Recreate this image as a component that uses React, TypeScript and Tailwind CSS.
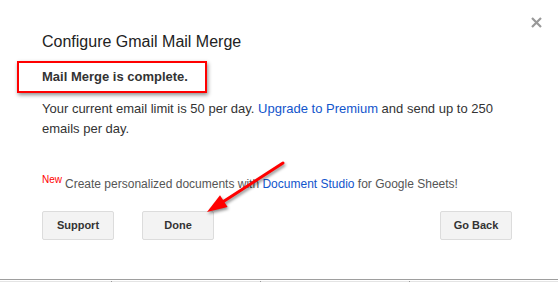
export default function App() {
  return (
    <div className="relative flex h-[282px] w-[558px] flex-col overflow-hidden bg-white font-['Liberation_Sans',Arial,sans-serif]">
      {/* close */}
      <button className="absolute right-[16px] top-[17px] text-[#999]" aria-label="Close">
        <svg width="11" height="11" viewBox="0 0 11 11">
          <path d="M1 1L10 10M10 1L1 10" stroke="currentColor" strokeWidth="2.2" />
        </svg>
      </button>

      <div className="pl-[42px] pt-[32px]">
        <h1 className="text-[16px] leading-[20px] text-[#222]">Configure Gmail Mail Merge</h1>

        <div className="-ml-[25px] mt-[9px] flex h-[32px] w-[190px] items-center border-2 border-[#f00] pl-[23px] shadow-[1px_2px_4px_rgba(0,0,0,0.45)]">
          <span className="text-[13px] font-bold text-[#333]">Mail Merge is complete.</span>
        </div>

        <p className="mt-[6px] w-[470px] text-[13px] leading-[20px] text-[#333]">
          Your current email limit is 50 per day. <a className="text-[#15c]">Upgrade to Premium</a> and send up to 250
          emails per day.
        </p>

        <p className="mt-[35px] text-[12px] leading-[20px] text-[#555]">
          <sup className="mr-[3px] text-[10px] text-[#f00]">New</sup>
          Create personalized documents with <a className="text-[#15c]">Document Studio</a> for Google Sheets!
        </p>

        <div className="mt-[17px] flex w-[470px] gap-[28px]">
          <button className="h-[29px] w-[72px] rounded-[2px] border border-[#dcdcdc] bg-[#f3f3f3] text-[11px] font-bold text-[#333]">
            Support
          </button>
          <button className="h-[29px] w-[72px] rounded-[2px] border border-[#dcdcdc] bg-[#f3f3f3] text-[11px] font-bold text-[#333]">
            Done
          </button>
          <button className="ml-auto h-[29px] w-[72px] rounded-[2px] border border-[#dcdcdc] bg-[#f3f3f3] text-[11px] font-bold text-[#333]">
            Go Back
          </button>
        </div>
      </div>

      {/* sheet edge below */}
      <div className="mt-auto mb-[1px] h-[1px] bg-[#9e9e9e]" />
      <div className="flex h-[1px] bg-[#e4e4e4]">
        <div className="w-[111px]" />
        <div className="w-[1px] bg-[#999]" />
        <div className="w-[148px]" />
        <div className="w-[1px] bg-[#999]" />
        <div className="w-[148px]" />
        <div className="w-[1px] bg-[#999]" />
      </div>

      {/* red arrow annotation */}
      <svg
        className="absolute left-[195px] top-[150px] drop-shadow-[1px_2px_1.5px_rgba(0,0,0,0.45)]"
        width="100"
        height="75"
        viewBox="0 0 100 75"
      >
        <path d="M88 13L28.8 51.2" stroke="#f00" strokeWidth="3" strokeLinecap="round" />
        <polygon points="12,62 32.6,57.1 25,45.3" fill="#f00" />
      </svg>
    </div>
  );
}
